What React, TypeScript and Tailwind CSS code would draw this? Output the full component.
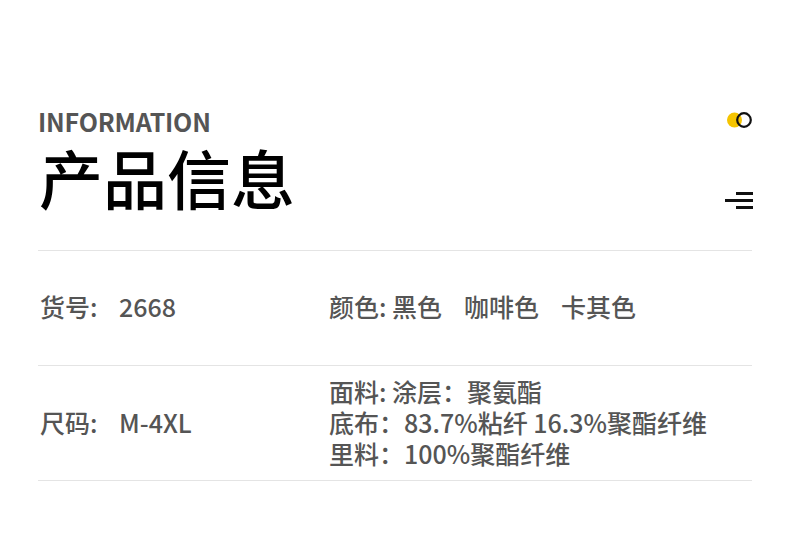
const font = { fontFamily: '"Noto Sans CJK SC", "Noto Sans", sans-serif' };

function Dots() {
  return (
    <svg width="27" height="18" viewBox="0 0 27 18">
      <circle cx="8.5" cy="9" r="7.5" fill="#f5c400" />
      <circle cx="18" cy="9" r="6.8" fill="none" stroke="#111" strokeWidth="2.2" />
    </svg>
  );
}

function Menu() {
  return (
    <svg width="28" height="20" viewBox="0 0 28 20">
      <rect x="11" y="1" width="17" height="3" fill="#111" />
      <rect x="0" y="8" width="28" height="3" fill="#111" />
      <rect x="11" y="15" width="17" height="3" fill="#111" />
    </svg>
  );
}

export default function App() {
  return (
    <div className="w-[790px] h-[544px] bg-white text-[#555]" style={font}>
      <div className="ml-[38px] w-[714px] pt-[104px]">
        <div className="flex justify-between items-start">
          <div>
            <div className="text-[25px] font-semibold tracking-[-0.2px] leading-[34px] text-[#555]">
              INFORMATION
            </div>
            <div className="text-[64px] font-medium leading-[76px] text-black ml-[1px]">
              产品信息
            </div>
          </div>
          <div className="flex flex-col items-end pt-[7px] -mr-[1px]">
            <Dots />
            <div className="mt-[62px]">
              <Menu />
            </div>
          </div>
        </div>

        <div className="mt-[36px] border-t border-[#e4e4e4]" />

        <div className="flex items-center h-[114px] pb-[4px] text-[25px] font-medium leading-[31px]">
          <div className="w-[81px] pl-[2px]">货号:</div>
          <div className="w-[210px]">2668</div>
          <div className="flex">
            <span>颜色: 黑色</span>
            <span className="ml-[22px]">咖啡色</span>
            <span className="ml-[22px]">卡其色</span>
          </div>
        </div>

        <div className="border-t border-[#e4e4e4]" />

        <div className="flex items-center h-[114px] pb-[2px] text-[25px] font-medium leading-[31px]">
          <div className="w-[81px] pl-[2px]">尺码:</div>
          <div className="w-[210px]">M-4XL</div>
          <div className="flex flex-col">
            <span>面料: 涂层：聚氨酯</span>
            <span>底布：83.7%粘纤 16.3%聚酯纤维</span>
            <span>里料：100%聚酯纤维</span>
          </div>
        </div>

        <div className="border-t border-[#e4e4e4]" />
      </div>
    </div>
  );
}
